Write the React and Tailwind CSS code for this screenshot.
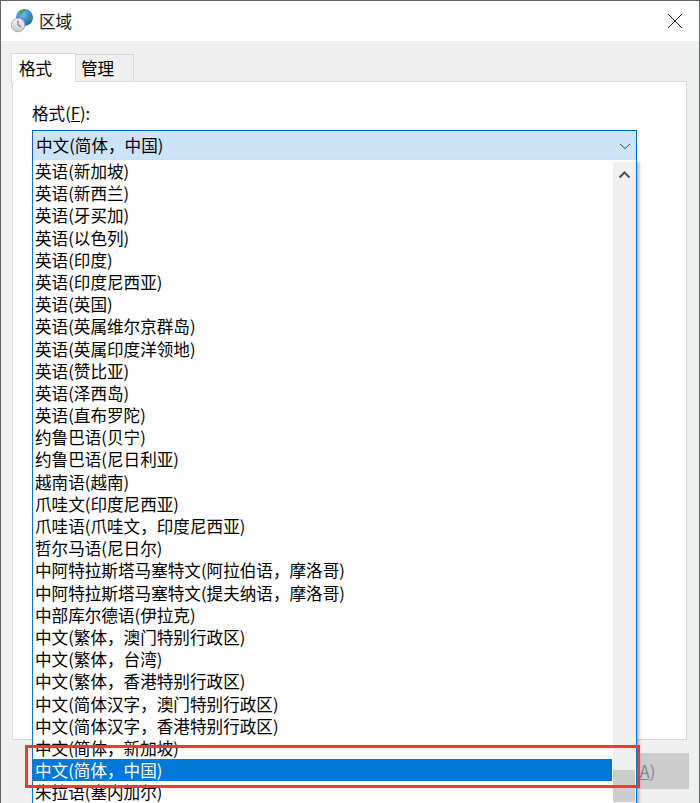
const font = "font-['Noto_Sans_CJK_SC','Noto_Sans',sans-serif]";

const options = [
  "英语(新加坡)", "英语(新西兰)", "英语(牙买加)", "英语(以色列)", "英语(印度)", "英语(印度尼西亚)",
  "英语(英国)", "英语(英属维尔京群岛)", "英语(英属印度洋领地)", "英语(赞比亚)", "英语(泽西岛)",
  "英语(直布罗陀)", "约鲁巴语(贝宁)", "约鲁巴语(尼日利亚)", "越南语(越南)", "爪哇文(印度尼西亚)",
  "爪哇语(爪哇文，印度尼西亚)", "哲尔马语(尼日尔)", "中阿特拉斯塔马塞特文(阿拉伯语，摩洛哥)",
  "中阿特拉斯塔马塞特文(提夫纳语，摩洛哥)", "中部库尔德语(伊拉克)", "中文(繁体，澳门特别行政区)",
  "中文(繁体，台湾)", "中文(繁体，香港特别行政区)", "中文(简体汉字，澳门特别行政区)",
  "中文(简体汉字，香港特别行政区)", "中文(简体，新加坡)", "中文(简体，中国)", "朱拉语(塞内加尔)",
];

function GlobeIcon() {
  return (
    <svg width="23" height="24" viewBox="0 0 23 24">
      <defs>
        <radialGradient id="globe" cx="0.4" cy="0.3" r="0.8">
          <stop offset="0" stopColor="#6fc0f0" />
          <stop offset="1" stopColor="#0f55b0" />
        </radialGradient>
        <linearGradient id="clock" x1="0" y1="0" x2="0" y2="1">
          <stop offset="0" stopColor="#f2f4f5" />
          <stop offset="1" stopColor="#c5cacd" />
        </linearGradient>
      </defs>
      <circle cx="13.5" cy="8.5" r="8.5" fill="url(#globe)" />
      <path d="M8 3c2-2 4-2.500 6-2.500l.5 1.500-2.500 1-1 2.500-2-.5z" fill="#46a83c" />
      <path d="M18 8l3-1 .5 2.500-2.500 3-1-2z" fill="#3f9e3a" />
      <circle cx="7" cy="16" r="6.800" fill="url(#clock)" stroke="#a5acb2" />
      <path d="M7 11.500v4.500l3 1.500" fill="none" stroke="#666" strokeWidth="1" />
    </svg>
  );
}

export default function App() {
  return (
    <div className={`relative w-[700px] h-[803px] overflow-hidden bg-[#f0f0f0] border-x border-t border-[#5f6368] text-black text-[16.6px] ${font}`}>
      <div className="flex items-center justify-between h-[40px] bg-white pl-[10px] pr-[16px]">
        <div className="flex items-center gap-[5px]">
          <GlobeIcon />
          <span className="text-[#1a1a1a]">区域</span>
        </div>
        <svg width="16" height="16" viewBox="0 0 16 16" className="stroke-[#222]">
          <path d="M1 1l14 14M15 1L1 15" fill="none" strokeWidth="1" />
        </svg>
      </div>

      <div className="flex items-end h-[40px] pl-[10px]">
        <div className="relative z-10 flex items-center w-[65px] h-[29px] -mb-px pl-[7px] bg-white border border-b-0 border-[#d9d9d9]">格式</div>
        <div className="flex items-center w-[58px] h-[27px] pl-[5px] bg-[#f0f0f0] border border-l-0 border-b-0 border-[#d9d9d9]">管理</div>
      </div>

      <div className="ml-[11px] w-[675px] h-[659px] bg-white border border-[#d9d9d9] pt-[20px] pl-[19px]">
        <div className="leading-[22px]">格式(<span className="underline">F</span>):</div>
        <div className="flex items-center justify-between w-[605px] h-[31px] mt-[6px] pl-[3px] pr-[4px] bg-[#cce4f7] border border-[#0a63b5]">
          <span>中文(简体，中国)</span>
          <svg width="14" height="14" viewBox="0 0 14 14">
            <path d="M2 5l5 4.500L12 5" fill="none" stroke="#444" strokeWidth="1" />
          </svg>
        </div>
      </div>

      <div className="flex justify-end mt-[13px] pr-[10px]">
        <div className="flex items-center justify-center w-[122px] h-[36px] bg-[#cccccc] text-[#7a8a99]">
          <span>应用(<span className="underline">A</span>)</span>
        </div>
      </div>

      <div className="absolute left-[31px] top-[159px] w-[605px] h-[660px] flex bg-white border-x border-[#0078d7] shadow-[2px_2px_3px_rgba(0,0,0,0.3)]">
        <div className="flex-1 min-w-0 pr-px">
          {options.map((label) => {
            const selected = label === "中文(简体，中国)";
            return (
              <div
                key={label}
                className={`h-[22.2px] leading-[22px] pl-[2px] whitespace-nowrap ${selected ? "bg-[#0078d7] text-white" : ""}`}
              >
                {label}
              </div>
            );
          })}
        </div>
        <div className="flex flex-col w-[23px] mt-[2px] bg-[#f0f0f0]">
          <div className="flex items-center justify-center h-[24px]">
            <svg width="13" height="9" viewBox="0 0 13 9">
              <path d="M1.500 7.500l5-5 5 5" fill="none" stroke="#505050" strokeWidth="2" />
            </svg>
          </div>
          <div className="mt-[584px] w-[22px] h-[32px] bg-[#cdcdcd]" />
        </div>
      </div>

      <div className="absolute left-[24px] top-[744px] w-[615px] h-[43px] border-[3px] border-[#f93636]" />
    </div>
  );
}
